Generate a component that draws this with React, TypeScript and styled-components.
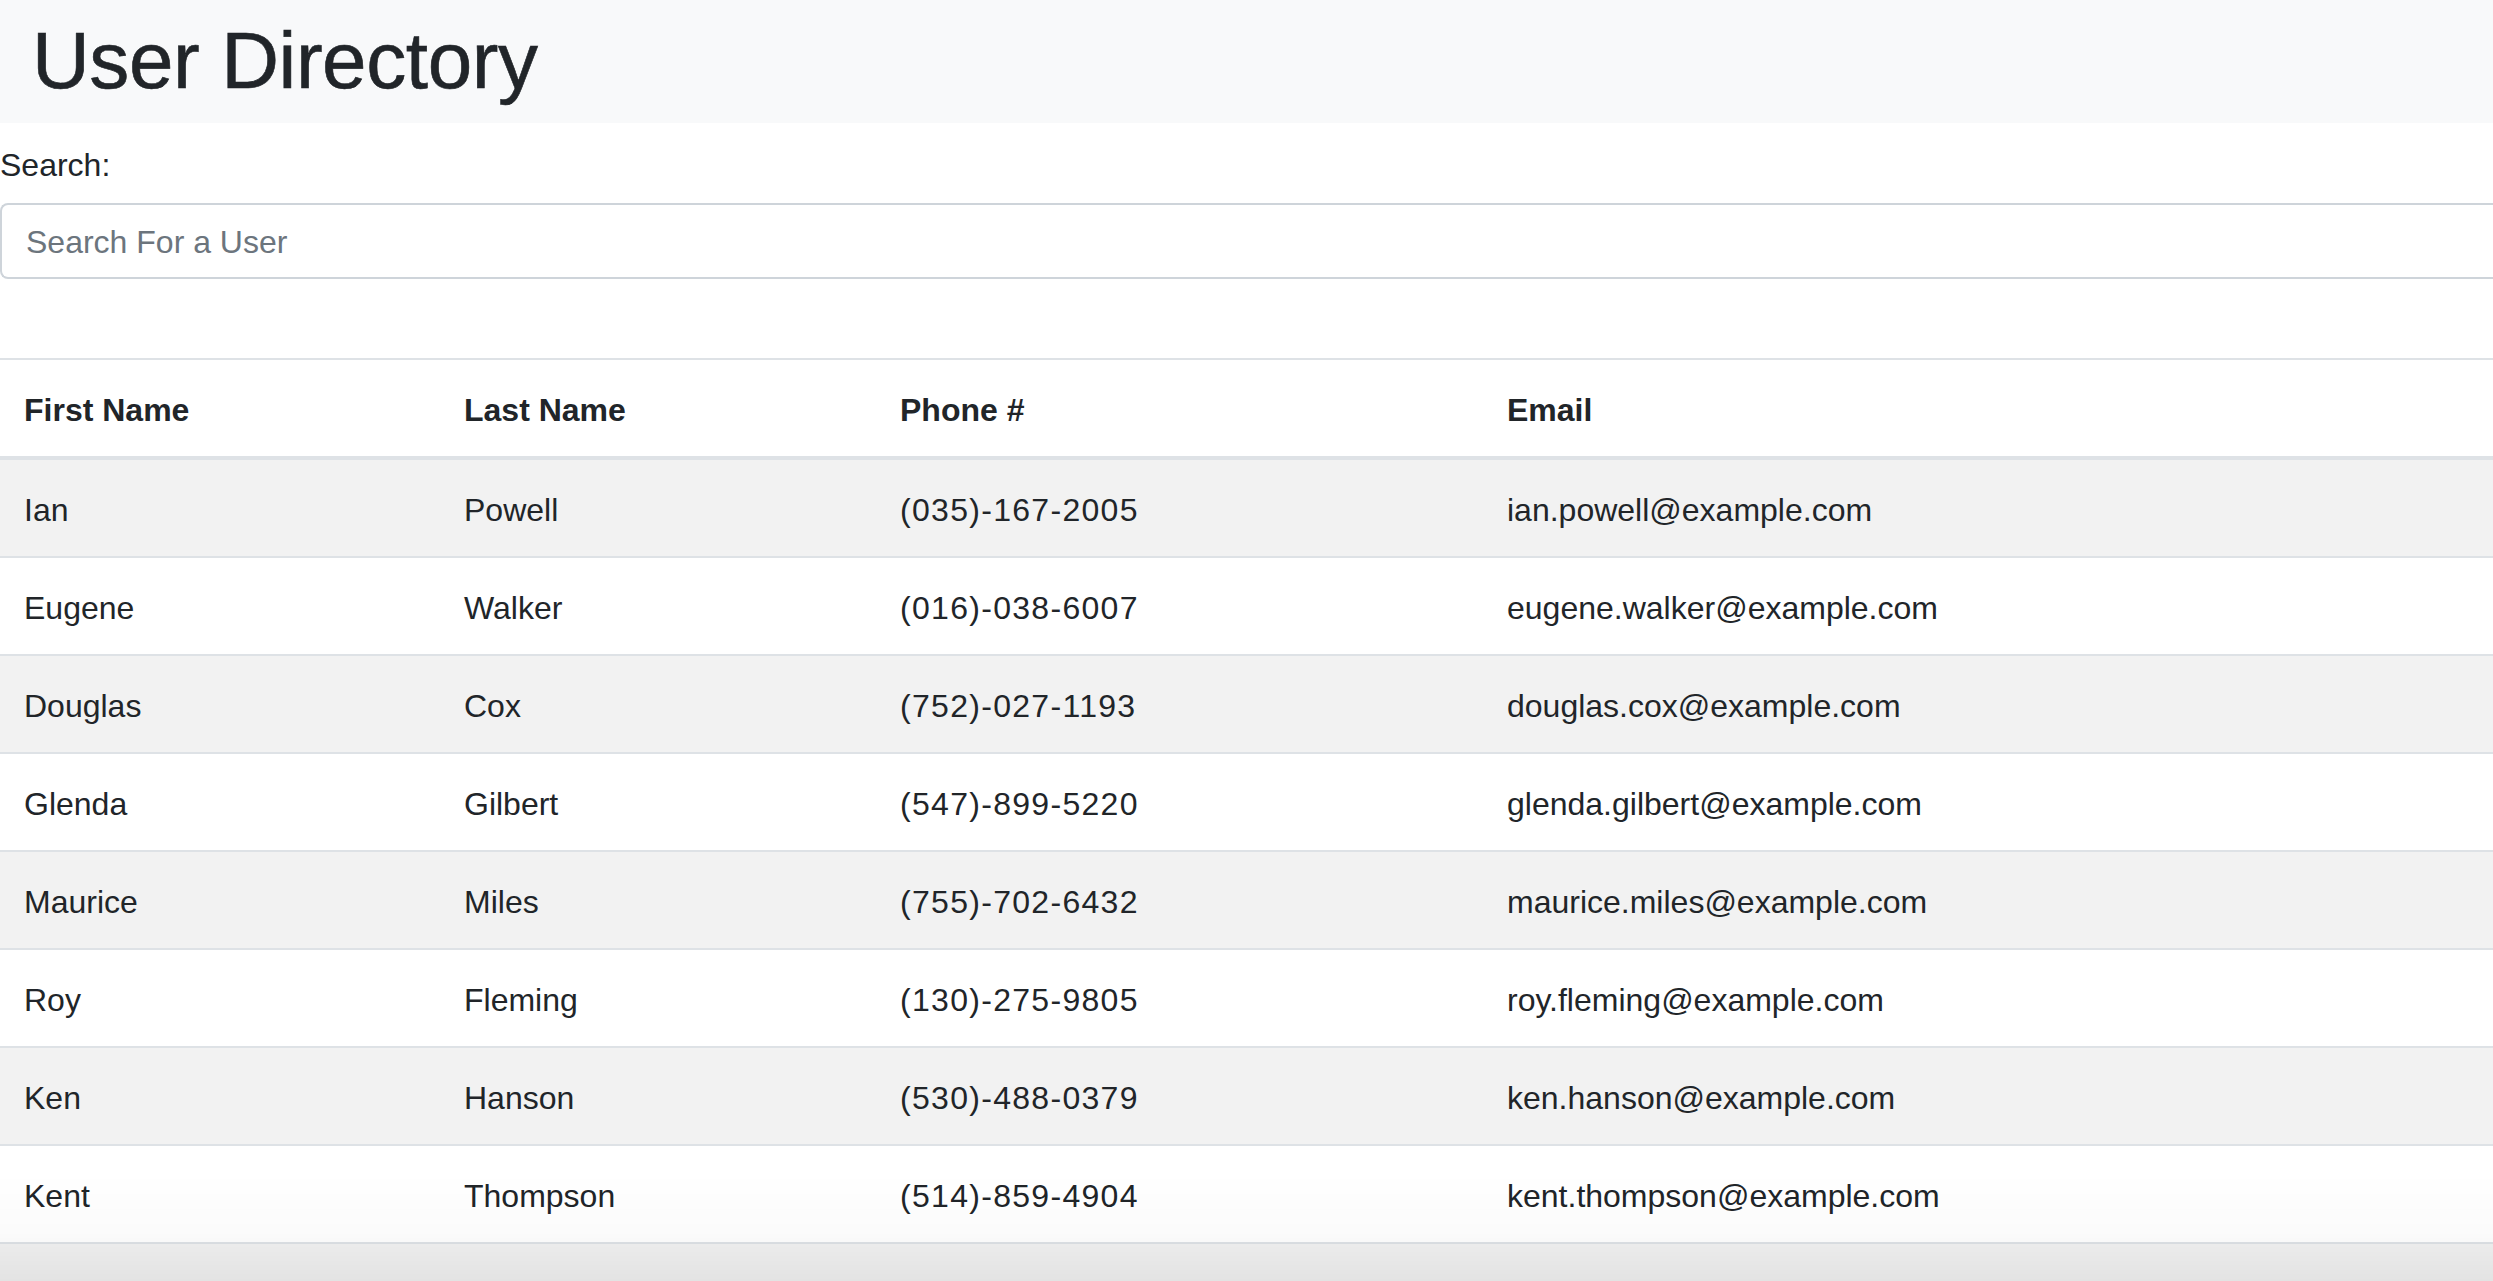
import React, { useState } from "react";
import styled, { createGlobalStyle } from "styled-components";

interface User {
  first: string;
  last: string;
  phone: string;
  email: string;
}

const users: User[] = [
  { first: "Ian", last: "Powell", phone: "(035)-167-2005", email: "ian.powell@example.com" },
  { first: "Eugene", last: "Walker", phone: "(016)-038-6007", email: "eugene.walker@example.com" },
  { first: "Douglas", last: "Cox", phone: "(752)-027-1193", email: "douglas.cox@example.com" },
  { first: "Glenda", last: "Gilbert", phone: "(547)-899-5220", email: "glenda.gilbert@example.com" },
  { first: "Maurice", last: "Miles", phone: "(755)-702-6432", email: "maurice.miles@example.com" },
  { first: "Roy", last: "Fleming", phone: "(130)-275-9805", email: "roy.fleming@example.com" },
  { first: "Ken", last: "Hanson", phone: "(530)-488-0379", email: "ken.hanson@example.com" },
  { first: "Kent", last: "Thompson", phone: "(514)-859-4904", email: "kent.thompson@example.com" },
];

const GlobalStyle = createGlobalStyle`
  html, body {
    margin: 0;
    padding: 0;
    overflow: hidden;
    background: #ffffff;
  }
  body {
    font-family: "Liberation Sans", Arial, sans-serif;
    font-size: 32px;
    line-height: 1.5;
    color: #212529;
  }
  * {
    box-sizing: border-box;
  }
`;

const App: React.FC = () => {
  const [query, setQuery] = useState("");

  const filtered = users.filter((u) =>
    `${u.first} ${u.last} ${u.phone} ${u.email}`
      .toLowerCase()
      .includes(query.toLowerCase())
  );

  return (
    <>
      <GlobalStyle />
      <Header>
        <Title>User Directory</Title>
      </Header>
      <SearchForm>
        <Label htmlFor="search">Search:</Label>
        <SearchInput
          id="search"
          type="text"
          placeholder="Search For a User"
          value={query}
          onChange={(e) => setQuery(e.target.value)}
        />
      </SearchForm>
      <Table>
        <colgroup>
          <col style={{ width: 440 }} />
          <col style={{ width: 436 }} />
          <col style={{ width: 607 }} />
          <col />
        </colgroup>
        <thead>
          <tr>
            <Th>First Name</Th>
            <Th>Last Name</Th>
            <Th>Phone #</Th>
            <Th>Email</Th>
          </tr>
        </thead>
        <tbody>
          {filtered.map((u, i) => (
            <Row key={u.email} $striped={i % 2 === 0}>
              <Td>{u.first}</Td>
              <Td>{u.last}</Td>
              <Td $digits>{u.phone}</Td>
              <Td>{u.email}</Td>
            </Row>
          ))}
          <Row $striped={filtered.length % 2 === 0}>
            <Td>&nbsp;</Td>
            <Td>&nbsp;</Td>
            <Td>&nbsp;</Td>
            <Td>&nbsp;</Td>
          </Row>
        </tbody>
      </Table>
      <BottomShade />
    </>
  );
};

const Header = styled.header`
  background-color: #f8f9fa;
  height: 123px;
  padding: 13px 32px 0;
`;

const Title = styled.h1`
  margin: 0;
  font-size: 80px;
  font-weight: 500;
  line-height: 96px;
  letter-spacing: -0.4px;
  color: #212529;
  -webkit-text-stroke: 0.6px #212529;
`;

const SearchForm = styled.div`
  padding-top: 18px;
  margin-bottom: 79px;
`;

const Label = styled.label`
  display: block;
  font-size: 32px;
  line-height: 48px;
  margin-bottom: 14px;
`;

const SearchInput = styled.input`
  display: block;
  width: 100%;
  height: 76px;
  padding: 2px 24px 0;
  font-family: inherit;
  font-size: 32px;
  color: #495057;
  background: #ffffff;
  border: 2px solid #ced4da;
  border-right: none;
  border-radius: 8px 0 0 8px;
  outline: none;

  &::placeholder {
    color: #6c757d;
  }
`;

const Table = styled.table`
  width: 100%;
  table-layout: fixed;
  border-collapse: collapse;
  color: #212529;
`;

const Th = styled.th`
  text-align: left;
  font-weight: 700;
  padding: 26px 24px 22px;
  line-height: 48px;
  border-top: 2px solid #dee2e6;
  border-bottom: 4px solid #dee2e6;
  white-space: nowrap;
`;

const Row = styled.tr<{ $striped: boolean }>`
  background-color: ${(p) => (p.$striped ? "#f2f2f2" : "#ffffff")};
`;

const Td = styled.td<{ $digits?: boolean }>`
  padding: 26px 24px 22px;
  line-height: 48px;
  border-top: 2px solid #dee2e6;
  white-space: nowrap;
  letter-spacing: ${(p) => (p.$digits ? "1.3px" : "normal")};
`;

const BottomShade = styled.div`
  position: fixed;
  left: 0;
  right: 0;
  bottom: 0;
  height: 110px;
  pointer-events: none;
  background: linear-gradient(
    to bottom,
    rgba(0, 0, 0, 0) 0%,
    rgba(0, 0, 0, 0.015) 55%,
    rgba(0, 0, 0, 0.06) 100%
  );
`;

export default App;
